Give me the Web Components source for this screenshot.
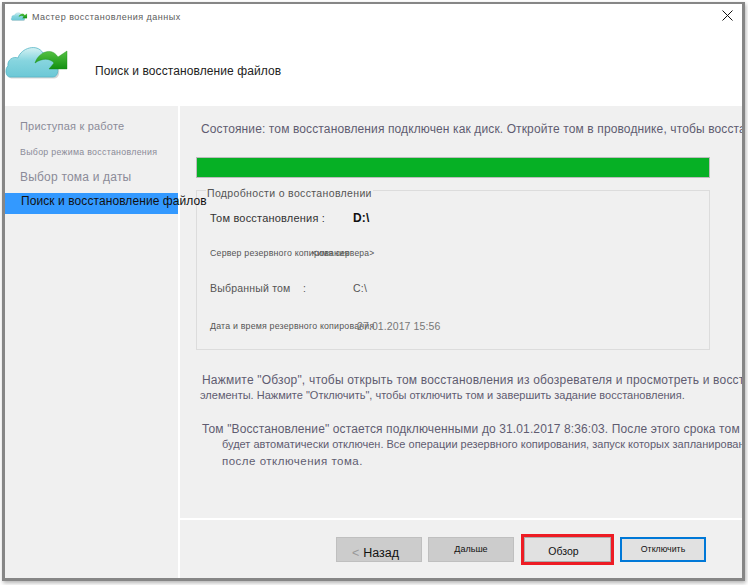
<!DOCTYPE html>
<html lang="ru">
<head>
<meta charset="utf-8">
<title>Мастер восстановления данных</title>
<style>
  html, body { margin: 0; height: 100%; background: #fff; overflow: hidden; }
  body { font-family: "Liberation Sans", "DejaVu Sans", sans-serif; color: #5f5c70; }
</style>
</head>
<body>
<wizard-window>
  <wizard-title slot="title">Мастер восстановления данных</wizard-title>
  <wizard-header slot="header">Поиск и восстановление файлов</wizard-header>
  <wizard-nav slot="nav">
    <nav-item size="11" top="12" spacing=".2">Приступая к работе</nav-item>
    <nav-item size="8.8" top="12" spacing=".3">Выбор режима восстановления</nav-item>
    <nav-item size="12" top="11" spacing=".2">Выбор тома и даты</nav-item>
    <nav-item size="12" top="9" spacing=".08" active>Поиск и восстановление файлов</nav-item>
  </wizard-nav>
  <status-line>Состояние: том восстановления подключен как диск. Откройте том в проводнике, чтобы восстановить файлы.</status-line>
  <progress-bar></progress-bar>
  <details-group label="Подробности о восстановлении">
    <detail-row label="Том восстановления&nbsp;:" value="D:\" size="11" top="20" at="143" bold></detail-row>
    <detail-row label="Сервер резервного копирования" value="&lt;имя сервера&gt;" size="8.8" top="21" at="102" vsize="8.5"></detail-row>
    <detail-row label="Выбранный том&nbsp;&nbsp;&nbsp;&nbsp;:" value="C:\" size="10.5" top="21" at="143"></detail-row>
    <detail-row label="Дата и время резервного копирования" value="27.01.2017 15:56" size="8.8" top="24" at="147" wide></detail-row>
  </details-group>
  <info-text>
    <p class="a">Нажмите "Обзор", чтобы открыть том восстановления из обозревателя и просмотреть и восстановить</p>
    <p class="b">элементы. Нажмите "Отключить", чтобы отключить том и завершить задание восстановления.</p>
    <p class="c">Том "Восстановление" остается подключенными до 31.01.2017 8:36:03. После этого срока том</p>
    <p class="d">будет автоматически отключен. Все операции резервного копирования, запуск которых запланирован</p>
    <p class="e">после отключения тома.</p>
  </info-text>
  <wizard-footer slot="footer">
    <wizard-button kind="disabled" size="12.5" drop="8" shift="7"><span style="color:#999;margin-right:4px">&lt;</span>Назад</wizard-button>
    <wizard-button kind="disabled" size="9" drop="0" lift>Дальше</wizard-button>
    <wizard-button kind="marked" size="10.5" drop="4" shift="8">Обзор</wizard-button>
    <wizard-button kind="focus" size="8.8">Отключить</wizard-button>
  </wizard-footer>
</wizard-window>

<script>
function define(name, css, html, setup) {
  customElements.define(name, class extends HTMLElement {
    constructor() {
      super();
      const root = this.attachShadow({ mode: "open" });
      root.innerHTML = `<style>${css}</style>${typeof html === "function" ? html(this) : html}`;
    }
    connectedCallback() {
      if (setup) setup(this);
    }
  });
}

define("cloud-icon", `
  :host { display: block; flex: none; }
  svg { display: block; width: 100%; height: 100%; overflow: visible; }
`, `
  <svg viewBox="0 0 62 32">
    <defs>
      <linearGradient id="c" x1="0" y1="0" x2="0" y2="1"><stop offset="0" stop-color="#d4f1f3"/><stop offset=".45" stop-color="#86d5df"/><stop offset="1" stop-color="#6cc8d6"/></linearGradient>
      <linearGradient id="g" x1="0" y1="0" x2="0" y2="1"><stop offset="0" stop-color="#56c243"/><stop offset="1" stop-color="#129012"/></linearGradient>
    </defs>
    <path d="M5 31C0 31 0 22 3 20 2 14 8 10 13 12 16 2 32-3 38 7 44 6 50 11 50 18 54 20 54 31 48 31Z" fill="#777" opacity=".3" transform="translate(1.5 1.5)"/>
    <path d="M5 31C0 31 0 22 3 20 2 14 8 10 13 12 16 2 32-3 38 7 44 6 50 11 50 18 54 20 54 31 48 31Z" fill="url(#c)" stroke="#58b6c6" stroke-width=".8"/>
    <path d="M30 17C33 7 46 0 53 11L62 5V23H44L49 17C45 12 37 12 30 17Z" fill="url(#g)" stroke="#0e8a0e" stroke-width=".4"/>
  </svg>
`);

define("wizard-window", `
  :host {
    display: block;
    box-sizing: border-box;
    width: 743px;
    height: 579px;
    margin: 2px 0 0 2px;
    border: solid #868686;
    border-width: 2px 3px 3px 3px;
    box-shadow: 1px 2px 4px rgba(0,0,0,.3);
    background: #f0f0f0;
    overflow: hidden;
  }
  .top { height: 102px; background: #fff; position: relative; }
  .mid { display: flex; height: 472px; }
  .nav { width: 173px; flex: none; position: relative; z-index: 1; }
  .main {
    width: 564px; flex: none; box-sizing: border-box;
    border-left: 2px solid #fff;
    display: flex; flex-direction: column;
    overflow: hidden;
  }
  .body { flex: 1; padding: 16px 0 0 16px; }
`, `
  <div class="top"><slot name="title"></slot><slot name="header"></slot></div>
  <div class="mid">
    <div class="nav"><slot name="nav"></slot></div>
    <div class="main">
      <div class="body"><slot></slot></div>
      <slot name="footer"></slot>
    </div>
  </div>
`);

define("wizard-title", `
  :host { display: flex; align-items: center; height: 26px; padding: 0 0 1px 6px; box-sizing: border-box; font-size: 9px; letter-spacing: .5px; color: #5c5c5c; position: relative; }
  cloud-icon { width: 16px; height: 9px; margin-right: 5px; }
  svg { position: absolute; left: 717px; top: 6px; width: 11px; height: 11px; }
`, `
  <cloud-icon></cloud-icon>
  <slot></slot>
  <svg viewBox="0 0 11 11"><path d="M.5.5l10 10M10.5.5l-10 10" stroke="#111" stroke-width="1" fill="none"/></svg>
`);

define("wizard-header", `
  :host { display: flex; align-items: flex-start; height: 76px; color: #222; font-size: 12px; letter-spacing: .1px; }
  cloud-icon { width: 62px; height: 32px; margin: 16px 28px 0 0; }
  span { margin: 34px 0 0 0; }
`, `
  <cloud-icon></cloud-icon>
  <span><slot></slot></span>
`);

define("wizard-nav", `:host { display: block; padding-top: 1px; }`, `<slot></slot>`);

define("nav-item", `
  :host { display: block; white-space: nowrap; color: #8b8b98; padding-left: 15px; line-height: 14px; }
  :host([active]) { background: #3399ff; color: #111; height: 21px; line-height: 17px; padding-left: 16px; }
`, `<slot></slot>`, el => {
  el.style.fontSize = el.getAttribute("size") + "px";
  el.style.marginTop = el.getAttribute("top") + "px";
  el.style.letterSpacing = el.getAttribute("spacing") + "px";
});

define("status-line", `
  :host { display: block; white-space: nowrap; font-size: 12px; letter-spacing: .12px; padding-left: 5px; line-height: 14px; color: #5f5c70; }
`, `<slot></slot>`);

define("progress-bar", `
  :host { display: block; box-sizing: border-box; width: 514px; height: 21px; margin-top: 21px; background: #06b025; border: 1px solid #bcbcbc; }
`, ``);

define("details-group", `
  :host { display: block; box-sizing: border-box; width: 514px; height: 160px; margin-top: 12px; border: 1px solid #dcdcdc; position: relative; padding-left: 13px; }
  .legend { position: absolute; left: 9px; top: -4px; padding: 0 1px; background: #f0f0f0; font-size: 10.5px; letter-spacing: .35px; line-height: 13px; color: #555; }
`, el => `<div class="legend">${el.getAttribute("label")}</div><slot></slot>`);

define("detail-row", `
  :host { display: flex; white-space: nowrap; line-height: 14px; color: #555; letter-spacing: .2px; }
  .label { flex: none; }
  .value { font-size: 10.5px; }
  :host([bold]) .value { font-weight: bold; color: #111; font-size: 12px; }
  :host([bold]) .label { color: #333; }
  :host([wide]) .value { color: #777; letter-spacing: .1px; }
`, el => `<div class="label" style="width:${el.getAttribute("at")}px">${el.getAttribute("label")}</div><div class="value"${el.hasAttribute("vsize") ? ` style="font-size:${el.getAttribute("vsize")}px"` : ""}>${el.getAttribute("value").replace(/</g, "&lt;")}</div>`, el => {
  el.style.fontSize = el.getAttribute("size") + "px";
  el.style.marginTop = el.getAttribute("top") + "px";
});

define("info-text", `
  :host { display: block; margin-top: 23px; white-space: nowrap; color: #5f5c70; }
  ::slotted(p) { margin: 0; }
`, `<slot></slot>`, el => {
  const rows = {
    a: ["12px", "14px", "6px", "0", ".2px"],
    b: ["11px", "14px", "4px", "1px", "0"],
    c: ["12px", "14px", "6px", "20px", ".12px"],
    d: ["11px", "14px", "26px", "1px", "0"],
    e: ["11.5px", "14px", "26px", "3px", ".5px"]
  };
  el.querySelectorAll("p").forEach(p => {
    const [size, height, left, top, spacing] = rows[p.className];
    Object.assign(p.style, { fontSize: size, lineHeight: height, marginLeft: left, marginTop: top, letterSpacing: spacing });
  });
});

define("wizard-footer", `
  :host { display: flex; align-items: center; gap: 6px; height: 60px; box-sizing: border-box; border-top: 2px solid #fff; padding: 0 0 0 156px; }
`, `<slot></slot>`);

define("wizard-button", `
  :host { display: block; box-sizing: border-box; width: 86px; height: 25px; color: #111; white-space: nowrap; }
  .b { box-sizing: border-box; width: 100%; height: 100%; display: flex; align-items: center; justify-content: center; border: 1px solid #bfbfbf; background: #cccccc; }
  :host([kind="marked"]) { width: 93px; height: 31px; margin-left: 1px; }
  :host([kind="marked"]) .b { border: 3px solid #ed1c24; box-shadow: inset 0 0 0 1px #adadad; background: #e1e1e1; }
  :host([kind="focus"]) .b { border: 2px solid #0078d7; background: #e1e1e1; }
  :host([lift]) .b { padding-bottom: 1px; }
`, el => `<div class="b" style="padding-top:${el.getAttribute("drop") || 0}px;padding-right:${el.getAttribute("shift") || 0}px"><slot></slot></div>`, el => {
  el.style.fontSize = el.getAttribute("size") + "px";
});
</script>
</body>
</html>
